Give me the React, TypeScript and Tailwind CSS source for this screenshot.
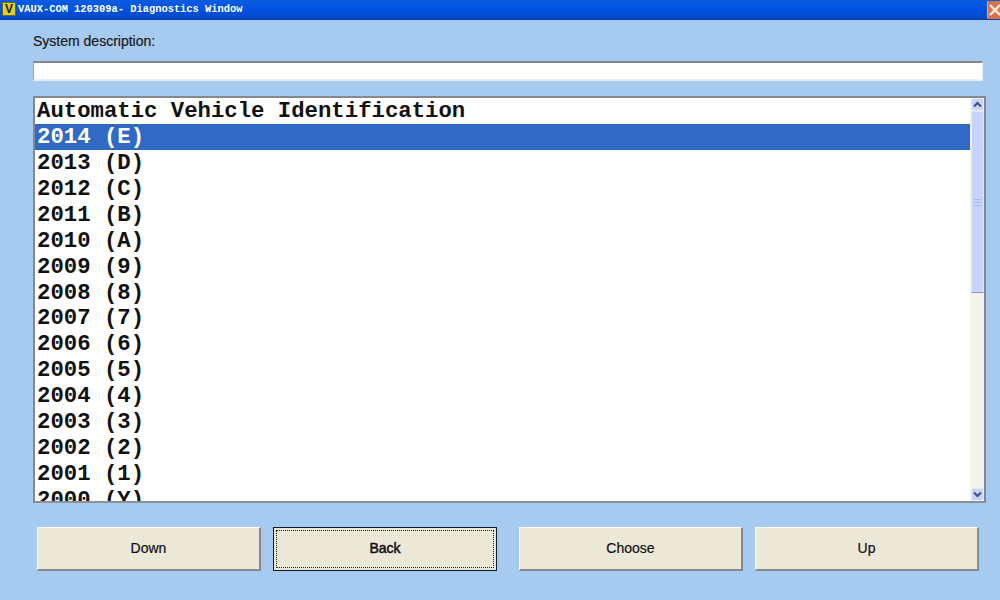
import React from 'react';

const years = ['2014 (E)', '2013 (D)', '2012 (C)', '2011 (B)', '2010 (A)', '2009 (9)', '2008 (8)', '2007 (7)', '2006 (6)', '2005 (5)', '2004 (4)', '2003 (3)', '2002 (2)', '2001 (1)', '2000 (Y)'];

const sans = "font-['Liberation_Sans',Arial,sans-serif]";

const Chevron = ({ up }: { up?: boolean }) => (
  <svg width="9" height="7" viewBox="0 0 9 7" fill="none" stroke="#3d4f80" strokeWidth="2">
    <path d={up ? 'M1 5.5 L4.5 2 L8 5.5' : 'M1 1.5 L4.5 5 L8 1.5'} />
  </svg>
);

const ScrollButton = ({ up }: { up?: boolean }) => (
  <div className="h-[13px] w-[13px] shrink-0 flex items-center justify-center rounded-[2px] bg-[#c6d5f7] border border-[#e4ecfc]">
    <Chevron up={up} />
  </div>
);

const App: React.FC = () => {
  return (
    <div className={`w-[1000px] h-[600px] overflow-hidden flex flex-col bg-[#a6caf0] ${sans}`}>
      {/* Title bar */}
      <div className="h-[20px] shrink-0 flex items-center justify-between bg-gradient-to-b from-[#0a5ce0] via-[#0052e2] to-[#0447c4] border-b border-[#0a3fa8]">
        <div className="flex items-center">
          <div className="w-[14px] h-[14px] ml-[2px] bg-[#e0d02a] border border-[#6e6a10] flex items-center justify-center text-[12px] leading-none font-bold text-[#1c1c08]">V</div>
          <span className="ml-[2px] whitespace-pre text-[10.4px] font-bold text-white font-['Liberation_Mono',monospace]">VAUX-COM 120309a- Diagnostics Window</span>
        </div>
        <div className="w-[13px] h-[18px] bg-[#dc7048] border-l border-[#f0b090] rounded-l-[2px] flex items-center justify-center overflow-hidden">
          <svg width="12" height="12" viewBox="0 0 12 12" stroke="#fdeee4" strokeWidth="2.4" className="ml-[2px] shrink-0">
            <path d="M1 1 L11 11 M11 1 L1 11" />
          </svg>
        </div>
      </div>

      {/* Description */}
      <div className="ml-[33px] mt-[13px] h-[16px] flex items-center text-[14px] text-[#1a1a1a] [-webkit-text-stroke:0.2px_#1a1a1a]">System description:</div>
      <div className="ml-[33px] mt-[12px] w-[950px] h-[20px] shrink-0 bg-white border-t-2 border-t-[#85898c] border-l border-l-[#a0a4a8] border-b-2 border-b-[#e6f0fb] border-r border-r-[#e6f0fb]" />

      {/* List */}
      <div className="ml-[33px] mt-[15px] w-[953px] h-[407px] shrink-0 flex bg-white border-2 border-[#85898c] border-b-[#8c9294] overflow-hidden">
        <div className="flex-1 min-w-0 overflow-hidden font-['Liberation_Mono',monospace] font-bold text-[22.3px] leading-[26px] text-[#111]">
          <div className="pl-[2px] h-[26px] whitespace-pre">Automatic Vehicle Identification</div>
          {years.map((year, i) => (
            <div key={year} className={`pl-[2px] h-[25.93px] whitespace-pre ${i === 0 ? 'bg-[#316ac5] text-white' : ''}`}>{year}</div>
          ))}
        </div>
        {/* Scrollbar */}
        <div className="w-[14px] shrink-0 flex flex-col bg-[#f4f2ec] pl-px">
          <ScrollButton up />
          <div className="h-[182px] shrink-0 flex items-center justify-center bg-[#c5d4f8] border border-[#dfe8fb] border-b-[#8a93b0]">
            <div className="w-[7px] h-[7px] border-y border-[#a9bbe6] flex items-center">
              <div className="w-full h-px bg-[#a9bbe6]" />
            </div>
          </div>
          <div className="flex-1" />
          <ScrollButton />
        </div>
      </div>

      {/* Buttons */}
      <div className="mt-[24px] flex text-[14px] text-[#111] [-webkit-text-stroke:0.2px_#111]">
        <button className="ml-[37px] w-[224px] h-[44px] bg-[#ebe8d8] border-t border-l border-t-white border-l-white border-r-2 border-b-2 border-r-[#85898c] border-b-[#85898c]">Down</button>
        <button className="ml-[12px] w-[224px] h-[44px] bg-[#ebe8d8] border border-[#10182a] p-[2px] [-webkit-text-stroke:0.5px_#111]">
          <span className="flex w-full h-full items-center justify-center border border-dotted border-[#222] pb-[2px]">Back</span>
        </button>
        <button className="ml-[22px] w-[224px] h-[44px] bg-[#ebe8d8] border-t border-l border-t-white border-l-white border-r-2 border-b-2 border-r-[#85898c] border-b-[#85898c]">Choose</button>
        <button className="ml-[12px] w-[224px] h-[44px] bg-[#ebe8d8] border-t border-l border-t-white border-l-white border-r-2 border-b-2 border-r-[#85898c] border-b-[#85898c]">Up</button>
      </div>
    </div>
  );
};

export default App;
